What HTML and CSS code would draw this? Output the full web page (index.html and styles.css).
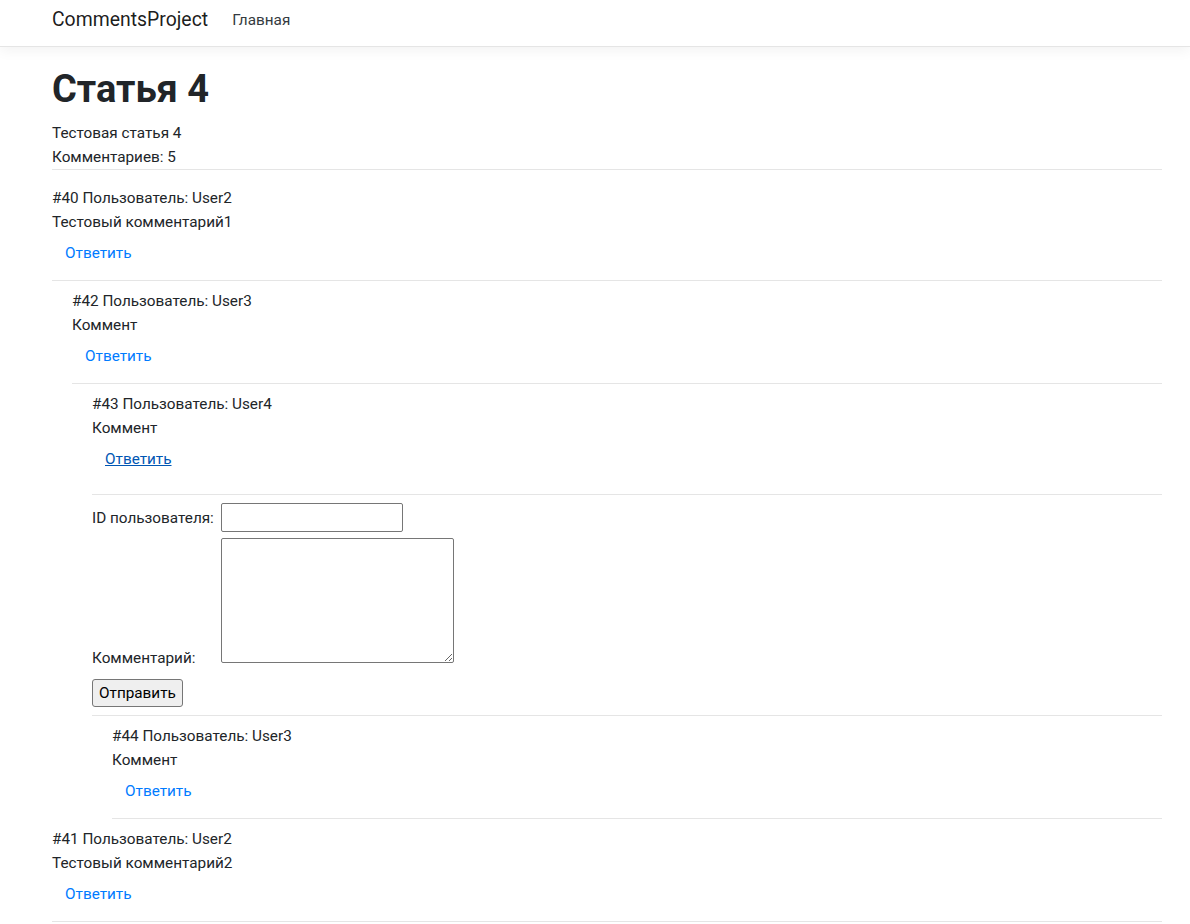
FILE: index.html
```html
<!DOCTYPE html>
<html lang="ru">
<head>
<meta charset="utf-8">
<title>Статья 4 - CommentsProject</title>
<link rel="stylesheet" href="styles.css">
</head>
<body>
<header class="navbar">
  <div class="container nav-inner">
    <a class="brand" href="#">CommentsProject</a>
    <a class="nav-link" href="#">Главная</a>
  </div>
</header>
<main class="container page">
  <h1 class="title">Статья 4</h1>
  <div class="line">Тестовая статья 4</div>
  <div class="line">Комментариев: 5</div>
  <hr class="sep sep-head">

  <div class="comment">
    <div class="line">#40 Пользователь: User2</div>
    <div class="line">Тестовый комментарий1</div>
    <button class="btn-link" type="button">Ответить</button>
    <hr class="sep">
    <div class="children">
      <div class="comment">
        <div class="line">#42 Пользователь: User3</div>
        <div class="line">Коммент</div>
        <button class="btn-link" type="button">Ответить</button>
        <hr class="sep">
        <div class="children">
          <div class="comment">
            <div class="line">#43 Пользователь: User4</div>
            <div class="line">Коммент</div>
            <button class="btn-link is-hover" type="button">Ответить</button>
            <hr class="sep sep-open">
            <form class="reply-form">
              <div class="form-row"><label class="form-label" for="uid">ID пользователя:</label><input class="uid-input" id="uid" type="text"></div>
              <div class="form-row area-row"><label class="form-label area-label" for="txt">Комментарий:</label><textarea class="txt-input" id="txt"></textarea></div>
              <button class="submit-btn" type="button">Отправить</button>
            </form>
            <hr class="sep">
            <div class="children">
              <div class="comment">
                <div class="line">#44 Пользователь: User3</div>
                <div class="line">Коммент</div>
                <button class="btn-link" type="button">Ответить</button>
                <hr class="sep">
              </div>
            </div>
          </div>
        </div>
      </div>
    </div>
  </div>

  <div class="comment">
    <div class="line">#41 Пользователь: User2</div>
    <div class="line">Тестовый комментарий2</div>
    <button class="btn-link" type="button">Ответить</button>
    <hr class="sep">
  </div>
</main>
</body>
</html>
```

FILE: styles.css
```css
* {
  box-sizing: border-box;
}

html, body {
  margin: 0;
  padding: 0;
  background: #fff;
}

body {
  font-family: Roboto, "Noto Sans", "Liberation Sans", sans-serif;
  font-size: 15.3px;
  line-height: 24px;
  color: #212529;
}

.container {
  padding: 0 28px 0 52px;
}

.navbar {
  height: 47px;
  padding-top: 5px;
  background: #fff;
  border-bottom: 1px solid #e5e5e5;
  box-shadow: 0 4px 12px rgba(0, 0, 0, 0.05);
}

.nav-inner {
  display: flex;
  align-items: center;
  height: 30px;
}

.brand {
  font-size: 19.4px;
  line-height: 30px;
  color: rgba(0, 0, 0, 0.9);
  text-decoration: none;
  margin-right: 24px;
}

.nav-link {
  color: #343a40;
  text-decoration: none;
  line-height: 24px;
}

.page {
  padding-top: 18px;
}

.title {
  margin: 0 0 8px;
  font-size: 38px;
  line-height: 48px;
  font-weight: 700;
}

.line {
  line-height: 24px;
}

.sep {
  border: 0;
  border-top: 1px solid rgba(0, 0, 0, 0.1);
  margin: 8px 0;
  height: 0;
}

.sep-head {
  margin: 0 0 16px;
}

.sep-open {
  margin-top: 16px;
}

.children {
  padding-left: 20px;
}

.btn-link {
  display: inline-block;
  font: inherit;
  line-height: 24px;
  padding: 6px 12px;
  border: 1px solid transparent;
  background: transparent;
  color: #007bff;
  cursor: pointer;
  border-radius: 4px;
}

.btn-link.is-hover {
  color: #0056b3;
  text-decoration: underline;
}

.form-row {
  display: flex;
  align-items: center;
}

.form-label {
  flex: 0 0 129px;
  line-height: 24px;
}

.uid-input {
  width: 182px;
  height: 29px;
  border: 1px solid #767676;
  border-radius: 2px;
  padding: 1px 2px;
  font: inherit;
}

.area-row {
  align-items: flex-end;
  margin-top: 6px;
}

.area-label {
  margin-bottom: -7px;
}

.txt-input {
  width: 233px;
  height: 125px;
  border: 1px solid #767676;
  border-radius: 2px;
  padding: 2px;
  font: inherit;
  resize: both;
}

.submit-btn {
  display: block;
  margin-top: 16px;
  font: inherit;
  line-height: 24px;
  height: 28px;
  padding: 1px 6px;
  background: #efefef;
  border: 1px solid #767676;
  border-radius: 3px;
  color: #000;
}
```
